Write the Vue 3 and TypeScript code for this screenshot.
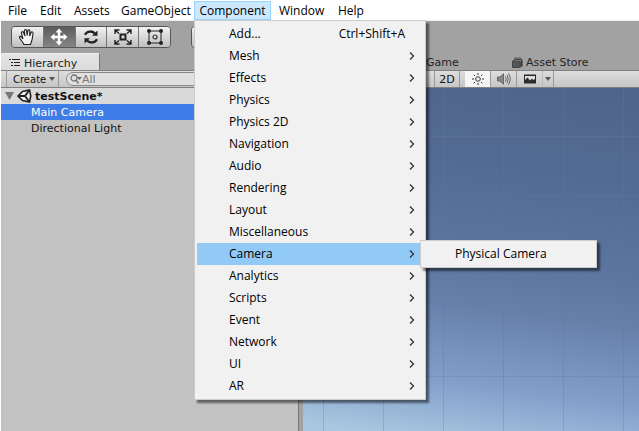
<script setup lang="ts">
interface MenuEntry {
  label: string
  shortcut?: string
  open?: boolean
}

const before: string[] = ['File', 'Edit', 'Assets', 'GameObject']
const after: string[] = ['Window', 'Help']

const entries: MenuEntry[] = [
  { label: 'Add...', shortcut: 'Ctrl+Shift+A' },
  { label: 'Mesh' },
  { label: 'Effects' },
  { label: 'Physics' },
  { label: 'Physics 2D' },
  { label: 'Navigation' },
  { label: 'Audio' },
  { label: 'Rendering' },
  { label: 'Layout' },
  { label: 'Miscellaneous' },
  { label: 'Camera', open: true },
  { label: 'Analytics' },
  { label: 'Scripts' },
  { label: 'Event' },
  { label: 'Network' },
  { label: 'UI' },
  { label: 'AR' },
]
</script>

<template>
  <div class="editor">
    <nav class="menubar">
      <button v-for="name in before" :key="name" class="menubar-item" type="button">{{ name }}</button>
      <div class="menubar-open">
        <button class="menubar-item active" type="button" aria-expanded="true">Component</button>
        <ul class="menu">
          <li v-for="entry in entries" :key="entry.label" class="menu-row">
            <button class="menu-item" :class="{ highlighted: entry.open }" type="button">
              <span>{{ entry.label }}</span>
              <span v-if="entry.shortcut" class="shortcut">{{ entry.shortcut }}</span>
              <svg v-else class="chevron" viewBox="0 0 6 8" width="6" height="8"><path d="M1 0.5 L4.5 4 L1 7.5" /></svg>
            </button>
            <ul v-if="entry.open" class="menu submenu">
              <li class="menu-row"><button class="menu-item" type="button">Physical Camera</button></li>
            </ul>
          </li>
        </ul>
      </div>
      <button v-for="name in after" :key="name" class="menubar-item" type="button">{{ name }}</button>
    </nav>

    <div class="workspace">
      <div class="toolbar">
        <div class="tool-group tools">
          <button class="tool" type="button" aria-label="Hand">
            <svg width="18" height="18" viewBox="0 0 18 18" class="line">
              <path d="M6 16.500 C5 14 2.500 12 1.500 9.500 C1.200 8.200 2.600 8 3.400 9 L5 11 L3.400 5 C3.400 3.400 5 3.200 5.500 4.600 L7 8 L6.300 2.800 C6.500 1.200 8.200 1.200 8.600 2.600 L9.200 7.500 L9.800 2.800 C10.200 1.400 11.800 1.700 11.800 3.200 L11.700 8 L13 4.600 C13.700 3.300 15.300 4 15.100 5.400 C14.300 8 14.800 10 13.800 12.500 L12.500 16.500 Z" />
            </svg>
          </button>
          <button class="tool pressed" type="button" aria-label="Move">
            <svg width="18" height="18" viewBox="0 0 18 18">
              <path d="M9 0.500 L12.500 4.500 H10.200 V7.800 H13.500 V5.500 L17.500 9 L13.500 12.500 V10.200 H10.200 V13.500 H12.500 L9 17.500 L5.500 13.500 H7.800 V10.200 H4.500 V12.500 L0.500 9 L4.500 5.500 V7.800 H7.800 V4.500 H5.500 Z" fill="#fff" />
            </svg>
          </button>
          <button class="tool" type="button" aria-label="Rotate">
            <svg width="18" height="18" viewBox="0 0 18 18">
              <path d="M3 6.800 C5 2.600 10 2.800 13 5.300 M15 11.200 C13 15.400 8 15.200 5 12.700" fill="none" stroke="#222" stroke-width="2.300" />
              <path d="M15.500 2.500 V7.800 H10 Z M2.500 15.500 V10.200 H8 Z" fill="#222" />
            </svg>
          </button>
          <button class="tool" type="button" aria-label="Scale">
            <svg width="18" height="18" viewBox="0 0 18 18">
              <path d="M6.500 6.500 H11.500 V11.500 H6.500 Z" fill="none" stroke="#222" stroke-width="2" />
              <path d="M1 6 V2 H5.500 M12.500 2 H17 V6 M17 12 V16 H12.500 M5.500 16 H1 V12 M1.500 2.500 L5 5.500 M16.500 2.500 L13 5.500 M16.500 15.500 L13 12.500 M1.500 15.500 L5 12.500" fill="none" stroke="#222" stroke-width="1.400" />
            </svg>
          </button>
          <button class="tool" type="button" aria-label="Rect">
            <svg width="18" height="18" viewBox="0 0 18 18">
              <path d="M3 3 H15 V15 H3 Z" fill="none" stroke="#222" />
              <circle cx="9" cy="9" r="2" fill="none" stroke="#333" stroke-width="1.200" />
              <circle cx="3" cy="3" r="2" fill="#222" /><circle cx="15" cy="3" r="2" fill="#222" />
              <circle cx="3" cy="15" r="2" fill="#222" /><circle cx="15" cy="15" r="2" fill="#222" />
            </svg>
          </button>
        </div>
        <div class="tool-group"><button class="tool wide" type="button" aria-label="Pivot"></button></div>
      </div>

      <div class="panels">
        <section class="hierarchy">
          <div class="tabs">
            <button class="tab current" type="button">
              <svg width="12" height="10" viewBox="0 0 12 10"><path d="M0 1.500 H2 M3 1.500 H11 M2 4.500 H4 M5 4.500 H11 M2 7.500 H4 M5 7.500 H11" stroke="#222" fill="none" /></svg>
              Hierarchy
            </button>
          </div>
          <div class="strip">
            <button class="create" type="button">Create <span class="caret"></span></button>
            <label class="search">
              <svg width="12" height="10" viewBox="0 0 12 10"><circle cx="4" cy="4" r="3" fill="none" stroke="#777" stroke-width="1.300" /><path d="M6 6 L8.500 9.500" stroke="#777" stroke-width="1.500" /><path d="M7 3 H12 L9.500 6 Z" fill="#666" /></svg>
              <input type="text" placeholder="All" aria-label="Search" />
            </label>
          </div>
          <ul class="tree">
            <li class="scene">
              <svg width="9" height="8" viewBox="0 0 9 8"><path d="M0 0 H9 L4.500 8 Z" fill="#777" /></svg>
              <svg width="15" height="14" viewBox="0 0 15 14">
                <path d="M1 7 L5.500 2.500 L12.500 1 L13.800 7 L12.500 13 L5.500 11.500 Z" fill="#eee" stroke="#222" stroke-width="1.600" />
                <path d="M1.500 7 H8 L12 1.500 M8 7 L12 12.500" fill="none" stroke="#222" stroke-width="1.800" />
              </svg>
              <span>testScene*</span>
            </li>
            <li class="node selected">Main Camera</li>
            <li class="node">Directional Light</li>
          </ul>
        </section>

        <section class="view">
          <div class="tabs view-tabs">
            <button class="tab game" type="button">Game</button>
            <button class="tab" type="button">
              <svg width="11" height="11" viewBox="0 0 11 11"><path d="M0.500 4 H8 V10.500 H0.500 Z" fill="#555" stroke="#444" /><path d="M8.500 4 L10.500 2.500 V9 L8.500 10.500 Z" fill="#333" /><path d="M1 4 L3 2.500 H10 M2.500 3 C2.500 0 5.500 0 5.500 2.500 M6 2.500 C6 0 9 0 9 2.500" fill="none" stroke="#444" /></svg>
              Asset Store
            </button>
          </div>
          <div class="strip view-strip">
            <button class="toggle two-d" type="button">2D</button>
            <button class="toggle lit" type="button" aria-label="Lighting">
              <svg width="12" height="12" viewBox="0 0 12 12"><circle cx="6" cy="6" r="2.300" fill="none" stroke="#333" /><path d="M6 0 V2 M6 10 V12 M0 6 H2 M10 6 H12 M1.700 1.700 L3 3 M9 9 L10.300 10.300 M10.300 1.700 L9 3 M3 9 L1.700 10.300" stroke="#333" fill="none" /></svg>
            </button>
            <button class="toggle" type="button" aria-label="Audio">
              <svg width="14" height="12" viewBox="0 0 14 12"><path d="M0.500 4 H3 L6.500 0.800 V11.200 L3 8 H0.500 Z" fill="#888" stroke="#666" /><path d="M8.500 3.500 Q10 6 8.500 8.500 M10 1.800 Q12.500 6 10 10.200 M11.500 0.300 Q15 6 11.500 11.700" fill="none" stroke="#666" /></svg>
            </button>
            <button class="toggle picture" type="button" aria-label="Effects">
              <svg width="12" height="10" viewBox="0 0 12 10"><path d="M0 0.500 H12 V9.500 H0 Z" fill="#2b2b2b" /><path d="M1 2 H11 V5 L9.500 6 L8 4.800 L6 6.500 L3.500 3.500 L1 6 Z" fill="#ddd" /></svg>
            </button>
            <button class="toggle more" type="button" aria-label="Effect options"><span class="caret"></span></button>
          </div>
          <div class="scene-view"></div>
        </section>
      </div>
    </div>
  </div>
</template>

<style>
body {
  margin: 0;
  background: #fff;
}
</style>

<style scoped>
.editor {
  display: flex;
  flex-direction: column;
  min-height: 100vh;
  font-family: "DejaVu Sans", sans-serif;
  font-size: 11px;
  color: #111;
}
button {
  margin: 0;
  padding: 0;
  border: 0;
  background: none;
  color: inherit;
  font: inherit;
  white-space: nowrap;
}
ul {
  margin: 0;
  padding: 0;
  list-style: none;
}
svg {
  flex: none;
}
.menubar {
  display: grid;
  grid-template-columns: 32px 34px 47px 81px 77px 59px 40px;
  height: 20px;
  padding-top: 1px;
  box-sizing: border-box;
  font-family: "Open Sans", sans-serif;
  font-size: 12px;
  color: #000;
}
.menubar-item {
  width: 100%;
  height: 19px;
  padding-left: 8px;
  line-height: 19px;
  text-align: left;
}
.menubar-open {
  position: relative;
}
.menubar-item.active {
  padding: 0;
  border: 1px solid #99d1ff;
  background: #cce8ff;
  line-height: 17px;
  text-align: center;
}
.menu {
  position: absolute;
  z-index: 2;
  top: 19px;
  left: 0;
  width: 232px;
  padding: 2px;
  box-sizing: border-box;
  border: 1px solid #ccc;
  background: #f1f1f1;
  box-shadow: 3px 3px 2px rgba(0, 0, 0, 0.5);
}
.menu-row {
  position: relative;
}
.menu-item {
  display: flex;
  align-items: center;
  justify-content: space-between;
  width: 100%;
  height: 22px;
  padding: 0 8px 0 32px;
  line-height: 20px;
}
.menu-item.highlighted {
  background: #91c9f7;
}
.shortcut {
  padding-right: 10px;
}
.chevron path {
  fill: none;
  stroke: #333;
  stroke-width: 1.3;
}
.submenu {
  top: -3px;
  left: calc(100% - 3px);
  width: 177px;
}
.workspace {
  flex: 1;
  display: flex;
  flex-direction: column;
  margin-left: 1px;
  border-top: 1px solid #f0f0f0;
  background: #a2a2a2;
}
.toolbar {
  display: flex;
  gap: 20px;
  padding: 5px 10px;
  height: 32px;
  box-sizing: border-box;
}
.tool-group {
  display: flex;
  height: 22px;
  box-sizing: border-box;
  border: 1px solid #555;
  border-radius: 4px;
  overflow: hidden;
}
.tools {
  width: 160px;
}
.tool {
  flex: 1;
  display: flex;
  align-items: center;
  justify-content: center;
  background: linear-gradient(#f2f2f2, #bfbfbf);
}
.tool + .tool {
  border-left: 1px solid #777;
}
.tool.pressed {
  background: linear-gradient(#5c5c5c, #858585);
}
.tool.wide {
  flex: none;
  width: 60px;
}
.line path {
  fill: #f4f4f4;
  stroke: #222;
  stroke-width: 1.1;
}
.panels {
  flex: 1;
  display: flex;
  gap: 4px;
}
.hierarchy {
  flex: none;
  display: flex;
  flex-direction: column;
  width: 298px;
}
.view {
  flex: 1;
  display: flex;
  flex-direction: column;
  min-width: 0;
}
.tabs {
  display: flex;
  height: 17px;
}
.tab {
  display: flex;
  align-items: center;
  gap: 3px;
  padding-top: 2px;
  color: #222;
}
.tab.current {
  width: 99px;
  padding-left: 8px;
  border-top: 1px solid #eee;
  border-right: 1px solid #777;
  background: linear-gradient(#e4e4e4, #dcdcdc);
}
.view-tabs {
  padding-left: 123px;
}
.tab.game {
  width: 86px;
}
.strip {
  display: flex;
  height: 18px;
  box-sizing: border-box;
  border-top: 1px solid #808080;
  border-bottom: 1px solid #808080;
  background: linear-gradient(#dedede, #c6c6c6);
}
.create {
  display: flex;
  align-items: center;
  gap: 3px;
  width: 53px;
  margin-left: 5px;
  padding-left: 6px;
  box-sizing: border-box;
  border: 0 solid #999;
  border-width: 0 1px;
  font-size: 10px;
}
.caret {
  border: 3px solid transparent;
  border-top: 4px solid #555;
  border-bottom: 0;
}
.search {
  flex: 1;
  display: flex;
  align-items: center;
  height: 12px;
  margin: 1px 6px 0 7px;
  padding-left: 3px;
  border: 1px solid #888;
  border-radius: 7px;
  background: #e0e0e0;
}
.search input {
  flex: 1;
  min-width: 0;
  padding: 0;
  border: 0;
  background: none;
  font: inherit;
}
.search input::placeholder {
  color: #777;
}
.tree {
  flex: 1;
  border-right: 1px solid #777;
  background: #c2c2c2;
}
.scene,
.node {
  display: flex;
  align-items: center;
  height: 16px;
}
.scene {
  gap: 3px;
  padding-left: 4px;
  background: #dadada;
  font-weight: bold;
}
.node {
  padding-left: 30px;
}
.selected {
  background: #3e7de7;
  color: #fff;
}
.view-strip {
  padding-left: 131px;
}
.toggle {
  display: flex;
  align-items: center;
  justify-content: center;
  width: 26px;
  box-sizing: border-box;
  border-right: 1px solid #999;
}
.two-d {
  border-left: 1px solid #999;
  margin-right: 5px;
}
.lit {
  background: #f5f5f5;
}
.picture {
  border-right-color: #bbb;
}
.more {
  width: 11px;
}
.scene-view {
  flex: 1;
  background:
    linear-gradient(90deg, rgba(100, 120, 140, 0.3) 1px, transparent 1px) 20px 0 / 60px 100%,
    linear-gradient(rgba(110, 125, 140, 0.3) 1px, transparent 1px) 0 48px / 100% 60px,
    linear-gradient(188deg, #50648a 0%, #536b93 25%, #5c769f 50%, #6680aa 62%, #829fcb 82%, #a8c8e0 98%);
}
</style>
